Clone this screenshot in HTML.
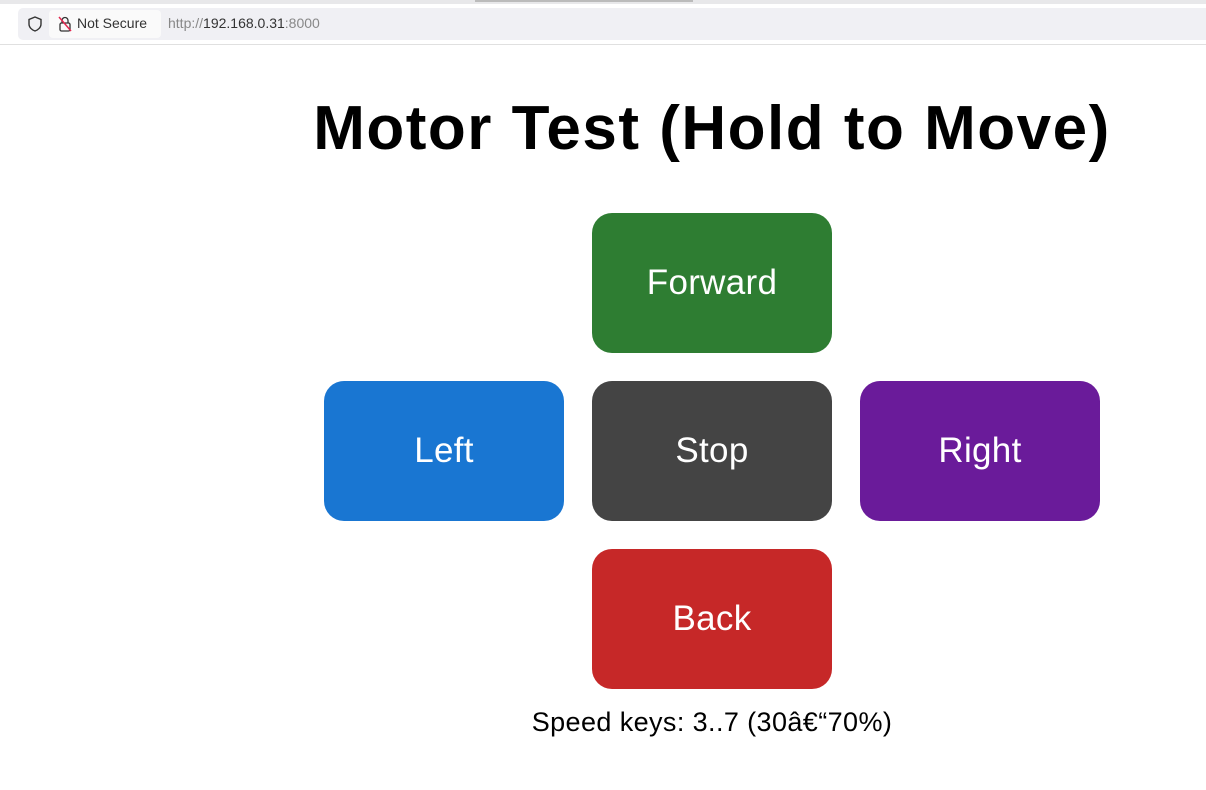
<!DOCTYPE html>
<html><head><meta charset="utf-8"><style>
body{margin:0;width:1206px;height:790px;background:#fff;font-family:"Liberation Sans",sans-serif;position:relative;overflow:hidden}
.top{position:absolute;left:0;top:0;width:1206px;height:4px;background:#e8e8ea}
.tab{position:absolute;left:475px;top:0;width:218px;height:2px;background:#bbb}
.bar{position:absolute;left:18px;top:8px;width:1200px;height:32px;background:#f0f0f4;border-radius:5px}
.line{position:absolute;left:0;top:44px;width:1206px;height:1px;background:#e0e0e0}
.ns{position:absolute;left:49px;top:10px;width:112px;height:28px;background:#fafafa;border-radius:4px}
.t{position:absolute;font-size:14px;top:15px}
h1{position:absolute;left:0;width:1424px;top:92px;margin:0;text-align:center;font-size:62px;font-weight:bold;line-height:74px;letter-spacing:1.5px}
.b{position:absolute;width:240px;height:140px;border-radius:20px;color:#fff;font-size:35px;display:flex;align-items:center;justify-content:center;letter-spacing:0.3px}
.s{position:absolute;left:0;width:1424px;top:707px;text-align:center;font-size:27px;letter-spacing:0.4px}
</style></head><body>
<div class="top"></div><div class="tab"></div>
<div class="bar"></div><div class="ns"></div><div class="line"></div>
<svg style="position:absolute;left:26px;top:15px" width="18" height="18" viewBox="0 0 18 18"><path d="M9 2 L15 4.5 V9 C15 12.5 12 15 9 16 C6 15 3 12.5 3 9 V4.5 Z" fill="none" stroke="#333" stroke-width="1.4"/></svg>
<svg style="position:absolute;left:57px;top:15px" width="16" height="18" viewBox="0 0 16 18"><rect x="3" y="8" width="10" height="8" rx="1.5" fill="none" stroke="#333" stroke-width="1.3"/><path d="M5 8 V5.5 A3 3 0 0 1 11 5.5 V8" fill="none" stroke="#333" stroke-width="1.3"/><path d="M2 2 L14 16" stroke="#e22850" stroke-width="1.5"/></svg>
<div class="t" style="left:77px;color:#333">Not Secure</div>
<div class="t" style="left:168px;color:#888">http://<span style="color:#333">192.168.0.31</span>:8000</div>
<h1>Motor Test (Hold to Move)</h1>
<div class="b" style="left:592px;top:213px;background:#2e7d32">Forward</div>
<div class="b" style="left:324px;top:381px;background:#1976d2">Left</div>
<div class="b" style="left:592px;top:381px;background:#444444">Stop</div>
<div class="b" style="left:860px;top:381px;background:#6a1b9a">Right</div>
<div class="b" style="left:592px;top:549px;background:#c62828">Back</div>
<div class="s">Speed keys: 3..7 (30â€“70%)</div>
</body></html>
